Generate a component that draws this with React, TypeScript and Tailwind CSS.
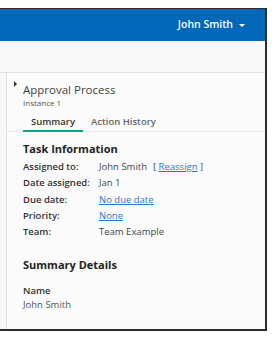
const rows = [
  { label: "Assigned to:", value: "John Smith", kind: "reassign" },
  { label: "Date assigned:", value: "Jan 1", kind: "text" },
  { label: "Due date:", value: "No due date", kind: "link" },
  { label: "Priority:", value: "None", kind: "link" },
  { label: "Team:", value: "Team Example", kind: "text" },
];

export default function App() {
  return (
    <div
      className="h-[338px] w-[277px] bg-white pt-[8px]"
      style={{ fontFamily: '"Open Sans", sans-serif' }}
    >
      <div className="flex h-[323px] w-[267px] flex-col border-t border-r-2 border-b-2 border-[#2d2d2d]">
        <div className="flex h-[32px] items-center justify-end bg-[#0068b9] pr-[20px]">
          <span className="text-[10.5px] font-semibold text-white">John Smith</span>
          <span className="ml-[6px] border-x-[3px] border-t-[3px] border-x-transparent border-t-white" />
        </div>
        <div className="h-[32px] border-b border-[#e2e2e2] bg-[#f8f8f8]" />
        <div className="flex flex-1">
          <div className="w-[7px] border-r border-[#e4e4e4] bg-[#f8f8f8]" />
          <div className="flex-1 bg-[#fbfbfb]">
            <div className="relative pl-[16px] pt-[9px]">
              <span className="absolute left-[7px] top-[8px] border-y-[3px] border-l-[3px] border-y-transparent border-l-[#333]" />
              <div className="text-[11.5px] leading-[16px] text-[#444]">Approval Process</div>
              <div className="text-[8px] leading-[10px] text-[#555]">Instance 1</div>
            </div>
            <div className="mt-[7px] flex border-b border-[#e6e6e6] pl-[16px] text-[9.5px] leading-[13px]">
              <div className="-mb-px w-[60px] border-b-2 border-[#16a085] pb-[2px] text-center font-semibold text-[#333]">
                Summary
              </div>
              <div className="ml-[8px] pb-[2px] font-semibold text-[#666]">Action History</div>
            </div>
            <div className="pl-[16px] pt-[8.5px]">
              <div className="text-[11px] font-bold leading-[15px] text-[#222]">Task Information</div>
              <div className="mt-[3px] flex flex-col">
                {rows.map((r) => (
                  <div key={r.label} className="flex h-[16.3px] items-center text-[9.5px] leading-[13px]">
                    <span className="w-[76px] font-semibold text-[#333]">{r.label}</span>
                    {r.kind === "link" ? (
                      <span className="text-[#2f72d4] underline">{r.value}</span>
                    ) : (
                      <span className="text-[#444]">
                        {r.value}
                        {r.kind === "reassign" && (
                          <>
                            <span className="ml-[6px]">[ </span>
                            <span className="text-[#2f72d4] underline">Reassign</span>
                            <span> ]</span>
                          </>
                        )}
                      </span>
                    )}
                  </div>
                ))}
              </div>
              <div className="mt-[17.5px] text-[11px] font-bold leading-[15px] text-[#222]">Summary Details</div>
              <div className="mt-[12px] text-[9.5px] font-semibold leading-[13px] text-[#333]">Name</div>
              <div className="mt-[1px] text-[9.5px] leading-[13px] text-[#555]">John Smith</div>
            </div>
          </div>
        </div>
      </div>
    </div>
  );
}
